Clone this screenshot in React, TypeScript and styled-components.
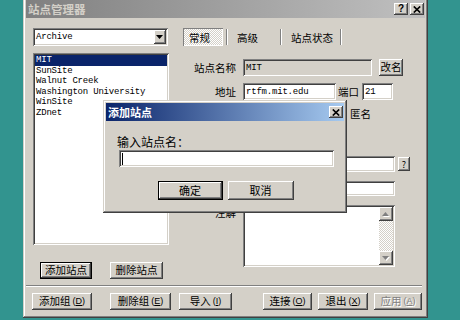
import React from 'react';
import styled, { createGlobalStyle, css } from 'styled-components';

const CJK = `"Noto Sans CJK SC", "Noto Sans", sans-serif`;
const MONO = `"Liberation Mono", "DejaVu Sans Mono", monospace`;

const Global = createGlobalStyle`
  html, body { margin: 0; padding: 0; background: #32948f; }
  body { font-family: ${CJK}; }
  * { box-sizing: border-box; }
`;

const raised = css`
  box-shadow: inset -1px -1px #404040, inset 1px 1px #ffffff, inset -2px -2px #808080, inset 2px 2px #d4d0c8;
`;
const sunken = css`
  box-shadow: inset 1px 1px #808080, inset -1px -1px #ffffff, inset 2px 2px #404040, inset -2px -2px #d4d0c8;
`;
const dither = css`
  background-color: #d4d0c8;
  background-image: repeating-conic-gradient(#ffffff 0 25%, #d4d0c8 0 50%);
  background-size: 2px 2px;
`;

const Desktop = styled.div`
  position: relative;
  width: 460px;
  height: 320px;
  overflow: hidden;
  background: #32948f;
`;

const Win = styled.div<{ $x: number; $y: number; $w: number; $h: number }>`
  position: absolute;
  left: ${p => p.$x}px;
  top: ${p => p.$y}px;
  width: ${p => p.$w}px;
  height: ${p => p.$h}px;
  padding: 3px;
  background: #d4d0c8;
  box-shadow: inset -1px -1px #404040, inset 1px 1px #d4d0c8, inset -2px -2px #808080, inset 2px 2px #ffffff;
  display: flex;
  flex-direction: column;
`;

const TitleBar = styled.div<{ $active?: boolean }>`
  flex: none;
  height: 18px;
  display: flex;
  align-items: center;
  padding: 0 1px 0 2px;
  background: ${p =>
    p.$active
      ? 'linear-gradient(to right, #0a246a, #a6caf0)'
      : 'linear-gradient(to right, #808080, #c0c0c0)'};
  color: ${p => (p.$active ? '#ffffff' : '#d4d0c8')};
`;

const TitleText = styled.span<{ $fs: number }>`
  flex: 1;
  font-family: ${CJK};
  font-weight: bold;
  font-size: ${p => p.$fs}px;
  line-height: 18px;
`;

const CapButtons = styled.div`
  display: flex;
  gap: 2px;
`;

const CapBtn = styled.div`
  width: 14px;
  height: 12px;
  display: flex;
  align-items: center;
  justify-content: center;
  background: #d4d0c8;
  ${raised};
  color: #000;
  font-family: "Liberation Sans", sans-serif;
  font-weight: bold;
  font-size: 10px;
  line-height: 12px;
`;

const MainBody = styled.div`
  flex: 1;
  display: flex;
  flex-direction: column;
  padding-top: 10px;
`;

const TopArea = styled.div`
  display: flex;
  gap: 14px;
  padding-left: 7px;
`;

const LeftCol = styled.div`
  width: 136px;
  display: flex;
  flex-direction: column;
`;

const Combo = styled.div`
  width: 135px;
  height: 18px;
  padding: 2px;
  display: flex;
  align-items: center;
  background: #fff;
  ${sunken};
`;

const ComboText = styled.span`
  flex: 1;
  padding-left: 1px;
  font-family: ${MONO};
  font-size: 9px;
  letter-spacing: -0.2px;
  color: #000;
`;

const DropBtn = styled.div`
  width: 12px;
  height: 14px;
  display: flex;
  align-items: center;
  justify-content: center;
  background: #d4d0c8;
  ${raised};
`;

const ListBox = styled.div`
  margin-top: 7px;
  height: 192px;
  padding: 2px;
  background: #fff;
  ${sunken};
  display: flex;
  flex-direction: column;
`;

const ListItem = styled.div<{ $sel?: boolean }>`
  height: 10.6px;
  line-height: 10.6px;
  padding-left: 1px;
  font-family: ${MONO};
  font-size: 9px;
  letter-spacing: -0.2px;
  white-space: nowrap;
  background: ${p => (p.$sel ? '#0a246a' : 'transparent')};
  color: ${p => (p.$sel ? '#fff' : '#000')};
`;

const LeftButtons = styled.div`
  margin-top: 17px;
  padding-left: 7px;
  display: flex;
  gap: 18px;
`;

const Btn = styled.div<{ $w: number; $h?: number; $ml?: number; $default?: boolean; $disabled?: boolean; $fs?: number }>`
  flex: none;
  width: ${p => p.$w}px;
  height: ${p => p.$h ?? 17}px;
  margin-left: ${p => p.$ml ?? 0}px;
  display: flex;
  align-items: center;
  justify-content: center;
  background: #d4d0c8;
  font-family: ${CJK};
  font-size: ${p => p.$fs ?? 10.5}px;
  line-height: 1;
  white-space: nowrap;
  color: ${p => (p.$disabled ? '#808080' : '#000')};
  text-shadow: ${p => (p.$disabled ? '1px 1px #ffffff' : 'none')};
  ${p =>
    p.$default
      ? css`box-shadow: inset 0 0 0 1px #000, inset -2px -2px #404040, inset 2px 2px #ffffff, inset -3px -3px #808080;`
      : raised};
`;

const Mn = styled.span`
  margin-left: 2px;
  font-family: "Liberation Sans", sans-serif;
  font-size: 9px;
  & u { text-underline-offset: 1px; }
`;

const RightCol = styled.div`
  flex: 1;
  display: flex;
  flex-direction: column;
`;

const Tabs = styled.div`
  height: 18px;
  display: flex;
  align-items: center;
`;

const Tab = styled.div<{ $w: number; $active?: boolean }>`
  width: ${p => p.$w}px;
  height: 18px;
  padding-left: 6px;
  display: flex;
  align-items: center;
  font-size: 10.5px;
  color: #000;
  ${p =>
    p.$active &&
    css`
      ${dither};
      box-shadow: inset 1px 1px #808080, inset -1px -1px #ffffff;
    `}
`;

const TabSep = styled.div`
  width: 2px;
  height: 16px;
  margin: 0 3px;
  border-left: 1px solid #808080;
  border-right: 1px solid #ffffff;
`;

const FormRow = styled.div<{ $mt: number; $top?: boolean }>`
  margin-top: ${p => p.$mt}px;
  display: flex;
  align-items: ${p => (p.$top ? 'flex-start' : 'center')};
`;

const Label = styled.span<{ $w?: number; $ml?: number; $pt?: number }>`
  width: ${p => (p.$w ? `${p.$w}px` : 'auto')};
  margin-left: ${p => p.$ml ?? 0}px;
  margin-right: ${p => (p.$w ? 7 : 3)}px;
  padding-top: ${p => p.$pt ?? 0}px;
  text-align: right;
  font-size: 10.5px;
  line-height: 12px;
  color: #000;
  white-space: nowrap;
`;

const Field = styled.div<{ $w: number; $h?: number; $disabled?: boolean }>`
  flex: none;
  width: ${p => p.$w}px;
  height: ${p => p.$h ?? 17}px;
  padding: 2px 3px;
  display: flex;
  align-items: center;
  background: ${p => (p.$disabled ? '#d4d0c8' : '#fff')};
  ${sunken};
  font-family: ${MONO};
  font-size: 9px;
  letter-spacing: -0.2px;
  color: #000;
`;

const Check = styled.div`
  width: 13px;
  height: 13px;
  margin: 0 4px 0 -3px;
  background: #fff;
  ${sunken};
`;

const TextArea = styled.div`
  width: 152px;
  height: 62px;
  padding: 2px;
  display: flex;
  justify-content: flex-end;
  background: #fff;
  ${sunken};
`;

const ScrollBar = styled.div`
  width: 14px;
  display: flex;
  flex-direction: column;
  justify-content: space-between;
  ${dither};
`;

const ScrollBtn = styled.div`
  width: 14px;
  height: 14px;
  display: flex;
  align-items: center;
  justify-content: center;
  background: #d4d0c8;
  ${raised};
`;

const Separator = styled.div`
  margin: 6px 3px 0 0;
  height: 2px;
  border-top: 1px solid #808080;
  border-bottom: 1px solid #ffffff;
`;

const BottomBar = styled.div`
  margin-top: 6px;
  padding: 0 3px 0 6px;
  display: flex;
`;

const DialogBody = styled.div`
  flex: 1;
  display: flex;
  flex-direction: column;
  padding: 0 10px 0 11px;
`;

const DlgLabel = styled.div`
  margin-top: 14px;
  font-size: 12px;
  line-height: 14px;
  color: #000;
`;

const DlgField = styled.div`
  margin: 1px 0 0 2px;
  width: 215px;
  height: 17px;
  padding: 2px 3px;
  display: flex;
  align-items: center;
  background: #fff;
  ${sunken};
`;

const Caret = styled.span`
  width: 1px;
  height: 12px;
  background: #000;
`;

const DlgButtons = styled.div`
  margin-top: 14px;
  display: flex;
  justify-content: center;
  gap: 5px;
`;

const XGlyph = () => (
  <svg width="8" height="7" viewBox="0 0 8 7">
    <path d="M0.8 0.5 L7.2 6.5 M7.2 0.5 L0.8 6.5" stroke="#000" strokeWidth="1.7" fill="none" />
  </svg>
);

const Arrow = ({ up, gray }: { up?: boolean; gray?: boolean }) => {
  const pts = up ? '3.5,0 7,4 0,4' : '0,0 7,0 3.5,4';
  return (
    <svg width="8" height="5" viewBox="0 0 8 5">
      {gray && <polygon points={pts} fill="#ffffff" transform="translate(1,1)" />}
      <polygon points={pts} fill={gray ? '#808080' : '#000'} />
    </svg>
  );
};

const sites = ['MIT', 'SunSite', 'Walnut Creek', 'Washington University', 'WinSite', 'ZDnet'];

const bottomButtons = [
  { t: '添加组', k: 'D', w: 60, ml: 0 },
  { t: '删除组', k: 'E', w: 61, ml: 18 },
  { t: '导入', k: 'I', w: 53, ml: 8 },
  { t: '连接', k: 'O', w: 49, ml: 31 },
  { t: '退出', k: 'X', w: 50, ml: 6 },
  { t: '应用', k: 'A', w: 48, ml: 6, disabled: true },
];

export default function App() {
  return (
    <>
      <Global />
      <Desktop>
        <Win $x={23} $y={-3} $w={405} $h={321}>
          <TitleBar>
            <TitleText $fs={11.5}>站点管理器</TitleText>
            <CapButtons>
              <CapBtn>?</CapBtn>
              <CapBtn>
                <XGlyph />
              </CapBtn>
            </CapButtons>
          </TitleBar>
          <MainBody>
            <TopArea>
              <LeftCol>
                <Combo>
                  <ComboText>Archive</ComboText>
                  <DropBtn>
                    <Arrow />
                  </DropBtn>
                </Combo>
                <ListBox>
                  {sites.map((s, i) => (
                    <ListItem key={s} $sel={i === 0}>
                      {s}
                    </ListItem>
                  ))}
                </ListBox>
                <LeftButtons>
                  <Btn $w={52} $default>
                    添加站点
                  </Btn>
                  <Btn $w={53}>删除站点</Btn>
                </LeftButtons>
              </LeftCol>
              <RightCol>
                <Tabs>
                  <Tab $w={40} $active>
                    常规
                  </Tab>
                  <TabSep />
                  <Tab $w={46}>高级</Tab>
                  <TabSep />
                  <Tab $w={52}>站点状态</Tab>
                  <TabSep />
                </Tabs>
                <FormRow $mt={13}>
                  <Label $w={53}>站点名称</Label>
                  <Field $w={129} $disabled>
                    MIT
                  </Field>
                  <Btn $w={24} $ml={7}>
                    改名
                  </Btn>
                </FormRow>
                <FormRow $mt={7}>
                  <Label $w={53}>地址</Label>
                  <Field $w={93}>rtfm.mit.edu</Field>
                  <Label $ml={2}>端口</Label>
                  <Field $w={31}>21</Field>
                </FormRow>
                <FormRow $mt={6}>
                  <Label $w={53} />
                  <Field $w={93} $h={16} />
                  <Check />
                  <Label>匿名</Label>
                </FormRow>
                <FormRow $mt={8}>
                  <Label $w={53} />
                  <Field $w={93} $h={16} />
                </FormRow>
                <FormRow $mt={10}>
                  <Label $w={53} />
                  <Field $w={152} $h={16} />
                  <Btn $w={12} $h={14} $ml={3} $fs={9}>
                    ?
                  </Btn>
                </FormRow>
                <FormRow $mt={9}>
                  <Label $w={53} />
                  <Field $w={152} $h={15} />
                </FormRow>
                <FormRow $mt={9} $top>
                  <Label $w={53} $pt={2}>
                    注解
                  </Label>
                  <TextArea>
                    <ScrollBar>
                      <ScrollBtn>
                        <Arrow up gray />
                      </ScrollBtn>
                      <ScrollBtn>
                        <Arrow gray />
                      </ScrollBtn>
                    </ScrollBar>
                  </TextArea>
                </FormRow>
              </RightCol>
            </TopArea>
            <Separator />
            <BottomBar>
              {bottomButtons.map(b => (
                <Btn key={b.k} $w={b.w} $ml={b.ml} $disabled={b.disabled}>
                  {b.t}
                  <Mn>
                    (<u>{b.k}</u>)
                  </Mn>
                </Btn>
              ))}
            </BottomBar>
          </MainBody>
        </Win>

        <Win $x={103} $y={100} $w={244} $h={113}>
          <TitleBar $active>
            <TitleText $fs={11}>添加站点</TitleText>
            <CapBtn>
              <XGlyph />
            </CapBtn>
          </TitleBar>
          <DialogBody>
            <DlgLabel>输入站点名：</DlgLabel>
            <DlgField>
              <Caret />
            </DlgField>
            <DlgButtons>
              <Btn $w={65} $h={19} $default $fs={11}>
                确定
              </Btn>
              <Btn $w={66} $h={19} $fs={11}>
                取消
              </Btn>
            </DlgButtons>
          </DialogBody>
        </Win>
      </Desktop>
    </>
  );
}
